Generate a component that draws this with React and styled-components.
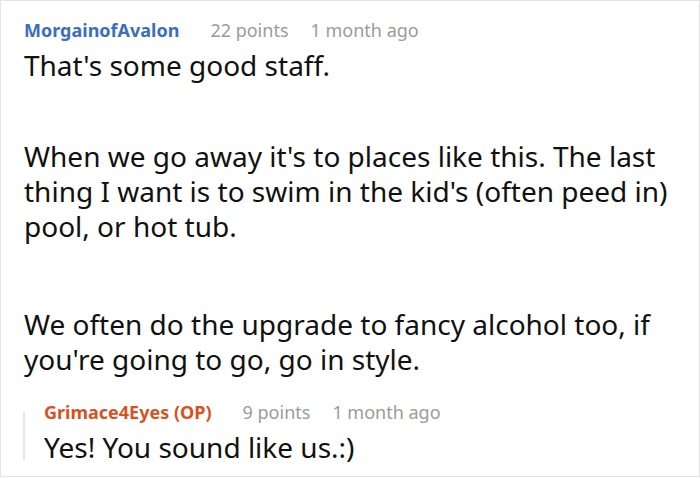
import styled, { createGlobalStyle } from "styled-components";

const GlobalStyle = createGlobalStyle`
  html, body {
    margin: 0;
    padding: 0;
    background: #ffffff;
  }
  body {
    font-family: "Noto Sans", "Open Sans", sans-serif;
  }
`;

const comment = {
  author: "MorgainofAvalon",
  points: "22 points",
  time: "1 month ago",
  paragraphs: [
    "That's some good staff.",
    "When we go away it's to places like this. The last thing I want is to swim in the kid's (often peed in) pool, or hot tub.",
    "We often do the upgrade to fancy alcohol too, if you're going to go, go in style.",
  ],
  reply: {
    author: "Grimace4Eyes (OP)",
    points: "9 points",
    time: "1 month ago",
    text: "Yes! You sound like us.:)",
  },
};

const App = () => (
  <>
    <GlobalStyle />
    <Frame>
      <Meta>
        <Author $color="#3b6ec0">{comment.author}</Author>
        <Points>{comment.points}</Points>
        <Time>{comment.time}</Time>
      </Meta>
      <Body>
        {comment.paragraphs.map((p) => (
          <Paragraph key={p}>{p}</Paragraph>
        ))}
      </Body>
      <Reply>
        <Rail />
        <ReplyContent>
          <Meta>
            <Author $color="#d6531f">{comment.reply.author}</Author>
            <Points>{comment.reply.points}</Points>
            <Time>{comment.reply.time}</Time>
          </Meta>
          <Body>
            <Paragraph>{comment.reply.text}</Paragraph>
          </Body>
        </ReplyContent>
      </Reply>
    </Frame>
  </>
);

export default App;

const Frame = styled.div`
  width: 700px;
  height: 477px;
  box-sizing: border-box;
  border: 1px solid #e4e4e4;
  padding: 17px 8px 0 23px;
  overflow: hidden;
`;

const Meta = styled.div`
  display: flex;
  align-items: baseline;
  font-size: 18px;
  line-height: 24px;
  white-space: nowrap;
`;

const Author = styled.span`
  font-weight: 700;
  color: ${(p) => p.$color};
  margin-right: 31px;
`;

const Points = styled.span`
  color: #9b9b9b;
  margin-right: 22px;
`;

const Time = styled.span`
  color: #9b9b9b;
`;

const Body = styled.div`
  margin-top: 6px;
`;

const Paragraph = styled.p`
  margin: 0;
  font-size: 28px;
  line-height: 35px;
  color: #111111;

  & + & {
    margin-top: 63px;
  }
  &:nth-child(2) {
    margin-top: 56px;
  }
`;

const Reply = styled.div`
  display: flex;
  margin: 23px 0 0 -1px;
`;

const Rail = styled.div`
  width: 2px;
  flex-shrink: 0;
  background: #e6e6e6;
  margin: 12px 0 5px;
`;

const ReplyContent = styled.div`
  flex: 1;
  padding-left: 19px;
`;
